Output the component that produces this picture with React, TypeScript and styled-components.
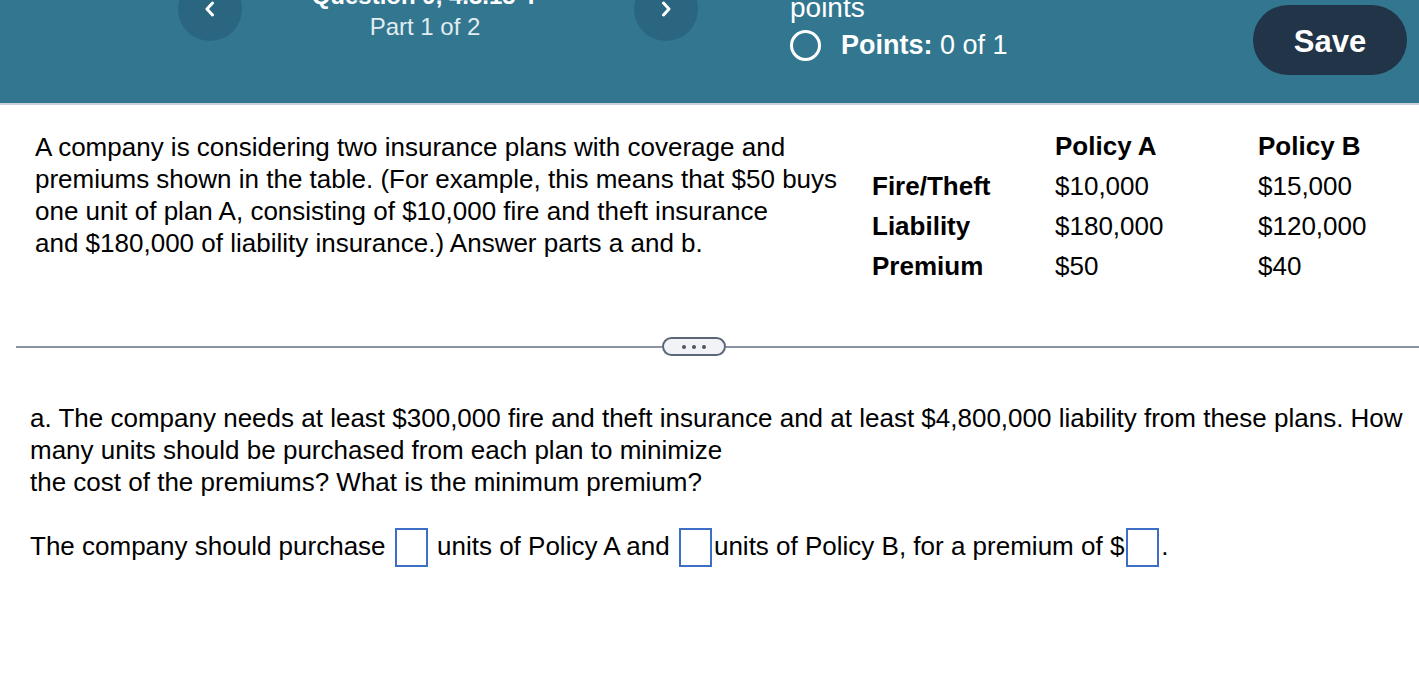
import styled, { createGlobalStyle } from 'styled-components';

const GlobalStyle = createGlobalStyle`
  body {
    margin: 0;
    background: #fff;
    color: #000;
    font-family: "Liberation Sans", Arial, Helvetica, sans-serif;
    overflow: hidden;
  }
`;

const Header = styled.header`
  margin-top: -40px;
  height: 143px;
  background: #32778f;
  border-bottom: 2px solid #cad1dc;
  display: flex;
  align-items: flex-start;
  padding: 0 12px 0 178px;
  color: #fff;
`;

const Nav = styled.nav`
  display: flex;
  align-items: flex-start;
  margin-top: 17px;
`;

const NavButton = styled.button`
  width: 64px;
  height: 64px;
  border-radius: 50%;
  border: 0;
  padding: 0;
  background: #2b6681;
  display: flex;
  align-items: center;
  justify-content: center;
`;

const NavCenter = styled.div`
  width: 392px;
  box-sizing: border-box;
  padding: 5px 26px 0 0;
  text-align: center;
`;

const Title = styled.div`
  font-size: 24px;
  line-height: 28px;
  font-weight: bold;
  white-space: nowrap;
`;

const PartLabel = styled.div`
  margin-top: 3px;
  font-size: 24px;
  line-height: 28px;
  color: #e2ecf1;
`;

const Score = styled.div`
  margin-left: 92px;
  font-size: 28px;
  line-height: 32px;
  white-space: nowrap;
`;

const PointsRow = styled.div`
  display: flex;
  align-items: center;
  gap: 20px;
  margin-top: 5px;
  font-size: 27px;

  & b {
    font-weight: bold;
  }
`;

const Radio = styled.span`
  width: 31px;
  height: 31px;
  box-sizing: border-box;
  border: 3px solid #fff;
  border-radius: 50%;
`;

const SaveButton = styled.button`
  margin-left: auto;
  margin-top: 45px;
  width: 154px;
  height: 70px;
  border: 0;
  border-radius: 35px;
  background: #223447;
  color: #fff;
  padding: 4px 0 0;
  font-family: inherit;
  font-size: 31px;
  font-weight: bold;
`;

const Problem = styled.section`
  display: flex;
  align-items: flex-start;
  padding: 21px 0 0 35px;
`;

const Intro = styled.p`
  margin: 5px 0 0;
  width: 837px;
  font-size: 26px;
  line-height: 32px;
  white-space: nowrap;
`;

const PolicyTable = styled.table`
  border-collapse: collapse;
  font-size: 26px;

  & td,
  & th {
    height: 40px;
    padding: 0;
    text-align: left;
    vertical-align: middle;
    white-space: nowrap;
  }

  & th {
    font-weight: bold;
  }
`;

const LabelCell = styled.th<{ $w?: number }>`
  width: ${(p) => p.$w ?? 183}px;
`;

const ValueCell = styled.td<{ $w?: number }>`
  width: ${(p) => (p.$w ? `${p.$w}px` : 'auto')};
`;

const Divider = styled.div`
  display: flex;
  align-items: center;
  margin-top: 51px;
  padding-left: 16px;
`;

const Rule = styled.div<{ $grow?: boolean }>`
  height: 2px;
  background: #8a94a3;
  width: ${(p) => (p.$grow ? 'auto' : '646px')};
  flex: ${(p) => (p.$grow ? 1 : 'none')};
`;

const MorePill = styled.button`
  width: 64px;
  height: 19px;
  box-sizing: border-box;
  border: 2px solid #5b6777;
  border-radius: 10px;
  background: #f1f3f6;
  padding: 0;
  display: flex;
  align-items: center;
  justify-content: center;
  gap: 6px;
`;

const Dot = styled.span`
  width: 4px;
  height: 4px;
  border-radius: 50%;
  background: #4b5563;
`;

const Question = styled.p`
  margin: 46px 0 0;
  padding-left: 30px;
  font-size: 26px;
  line-height: 32px;
  white-space: nowrap;
`;

const Answer = styled.p`
  margin: 28px 0 0;
  padding-left: 30px;
  font-size: 26px;
  line-height: 40px;
  white-space: nowrap;
`;

const AnswerBox = styled.span`
  display: inline-block;
  width: 33px;
  height: 39px;
  box-sizing: border-box;
  border: 2px solid #3c6fc5;
  margin: 0 2px;
  vertical-align: -12px;
`;

const rows = [
  { label: 'Fire/Theft', a: '$10,000', b: '$15,000' },
  { label: 'Liability', a: '$180,000', b: '$120,000' },
  { label: 'Premium', a: '$50', b: '$40' },
];

function Chevron({ dir }: { dir: 'left' | 'right' }) {
  return (
    <svg width="12" height="16" viewBox="0 0 12 16">
      <polyline
        points={dir === 'left' ? '8.5,2 3,8 8.5,14' : '3.5,2 9,8 3.5,14'}
        fill="none"
        stroke="#fff"
        strokeWidth="3"
        strokeLinecap="round"
        strokeLinejoin="round"
      />
    </svg>
  );
}

export default function App() {
  return (
    <>
      <GlobalStyle />
      <Header>
        <Nav>
          <NavButton aria-label="Previous part">
            <Chevron dir="left" />
          </NavButton>
          <NavCenter>
            <Title>Question 9, 4.3.15-T</Title>
            <PartLabel>Part 1 of 2</PartLabel>
          </NavCenter>
          <NavButton aria-label="Next part">
            <Chevron dir="right" />
          </NavButton>
        </Nav>
        <Score>
          <div>HW Score: 0%, 0 of 12</div>
          <div>points</div>
          <PointsRow>
            <Radio />
            <span>
              <b>Points:</b> 0 of 1
            </span>
          </PointsRow>
        </Score>
        <SaveButton>Save</SaveButton>
      </Header>

      <Problem>
        <Intro>
          A company is considering two insurance plans with coverage and
          <br />
          premiums shown in the table. (For example, this means that $50 buys
          <br />
          one unit of plan A, consisting of $10,000 fire and theft insurance
          <br />
          and $180,000 of liability insurance.) Answer parts a and b.
        </Intro>
        <PolicyTable>
          <tbody>
            <tr>
              <LabelCell />
              <LabelCell $w={203}>Policy A</LabelCell>
              <LabelCell $w={160}>Policy B</LabelCell>
            </tr>
            {rows.map((row) => (
              <tr key={row.label}>
                <LabelCell>{row.label}</LabelCell>
                <ValueCell $w={203}>{row.a}</ValueCell>
                <ValueCell>{row.b}</ValueCell>
              </tr>
            ))}
          </tbody>
        </PolicyTable>
      </Problem>

      <Divider>
        <Rule />
        <MorePill aria-label="More">
          <Dot />
          <Dot />
          <Dot />
        </MorePill>
        <Rule $grow />
      </Divider>

      <Question>
        a. The company needs at least $300,000 fire and theft insurance and at
        least $4,800,000 liability from these plans. How
        <br />
        many units should be purchased from each plan to minimize
        <br />
        the cost of the premiums? What is the minimum premium?
      </Question>

      <Answer>
        The company should purchase <AnswerBox /> units of Policy A and{' '}
        <AnswerBox />
        units of Policy B, for a premium of $<AnswerBox />.
      </Answer>
    </>
  );
}
